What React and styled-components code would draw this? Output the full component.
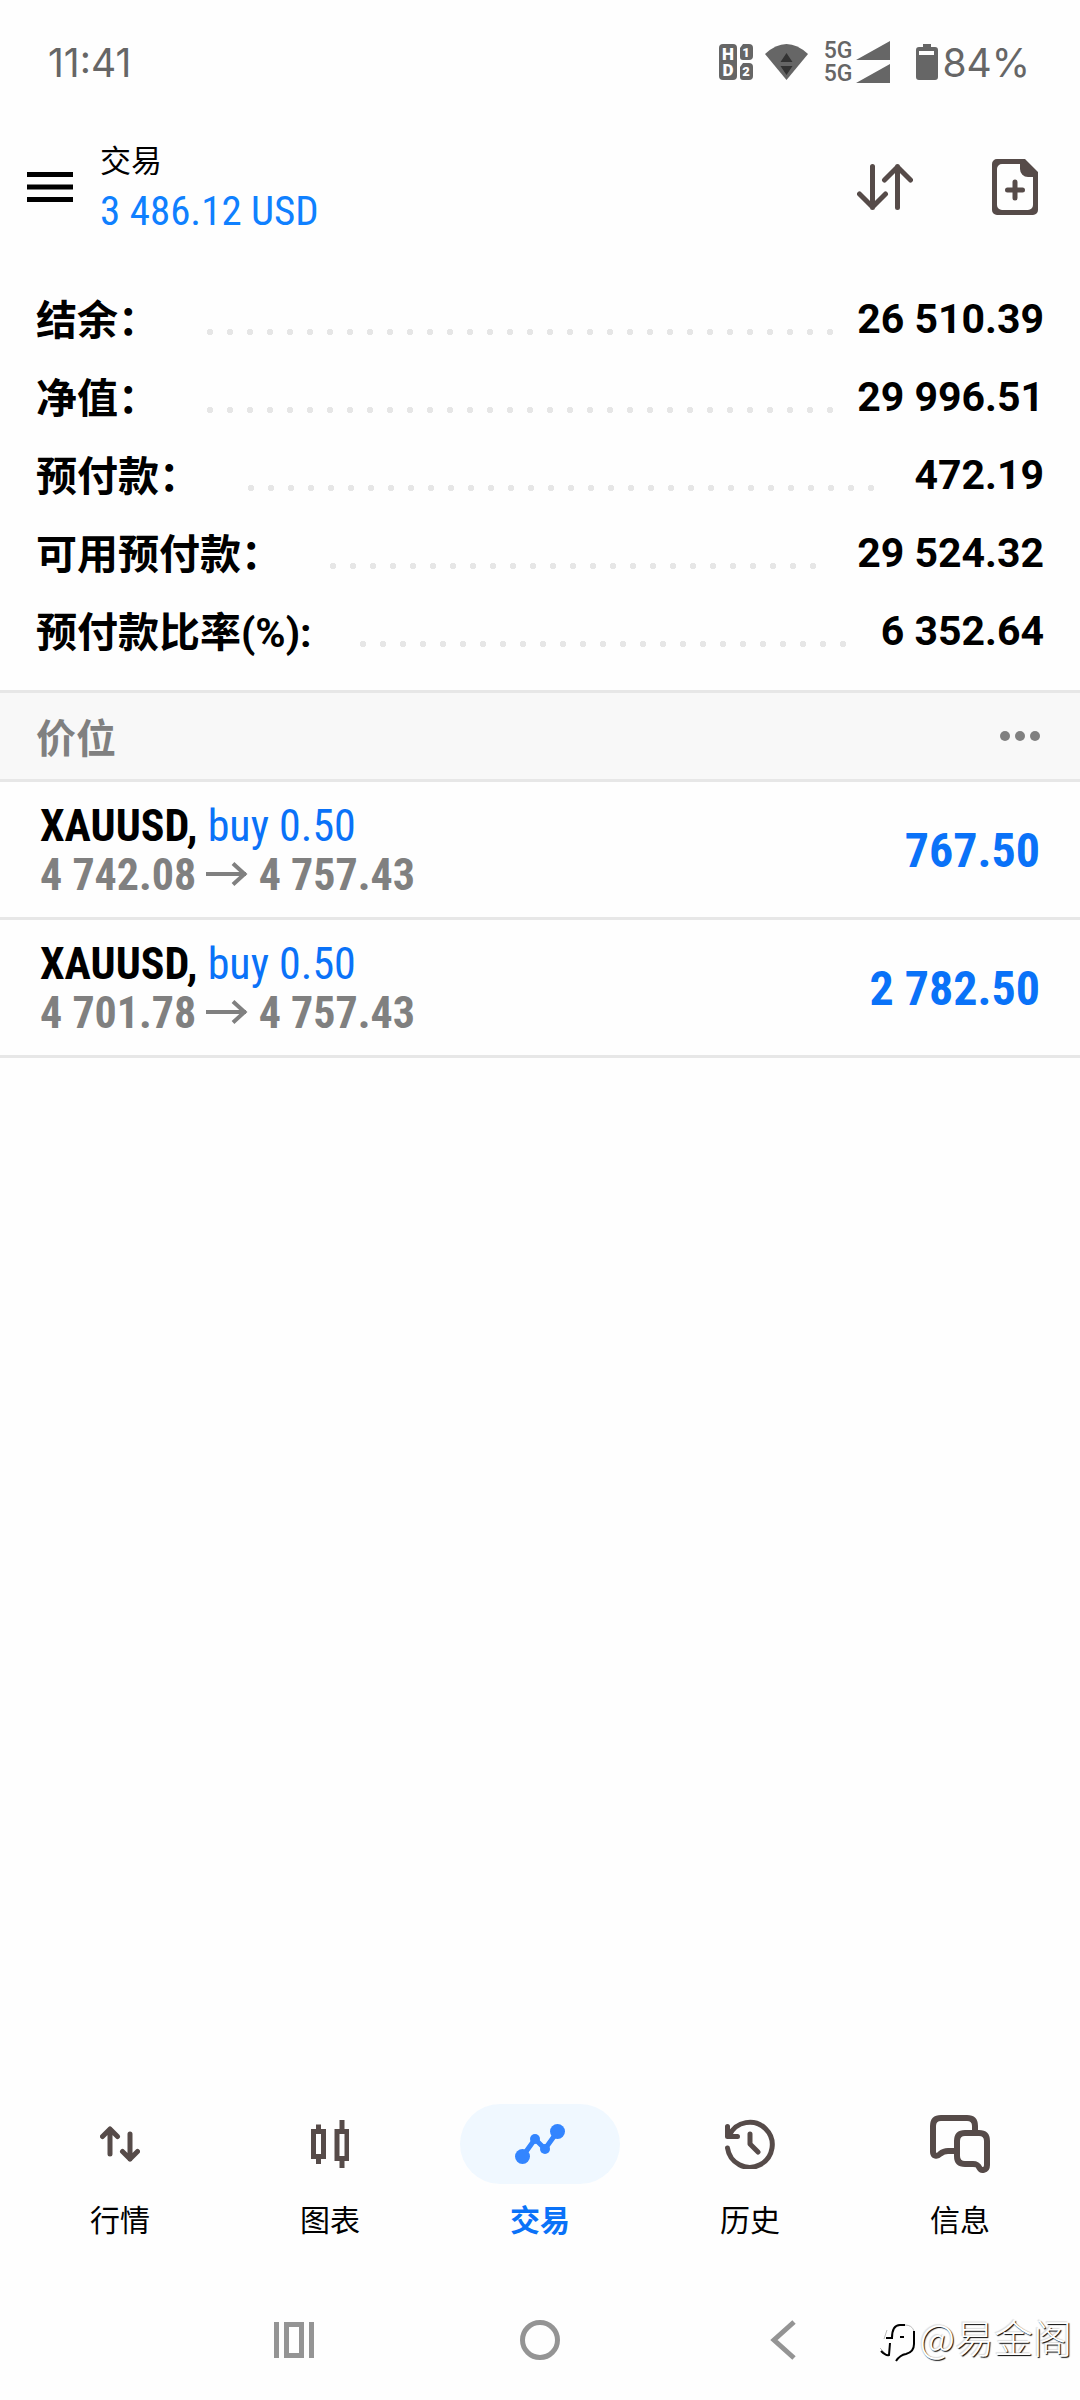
import React, { useState } from 'react';
import styled, { createGlobalStyle } from 'styled-components';

const condensed = `'Roboto Condensed', 'Liberation Sans Narrow', Roboto, 'Noto Sans CJK SC', sans-serif`;

const summary = [
    { label: '结余：', value: '26 510.39' },
    { label: '净值：', value: '29 996.51' },
    { label: '预付款：', value: '472.19' },
    { label: '可用预付款：', value: '29 524.32' },
    { label: '预付款比率(%):', value: '6 352.64' },
];

const positions = [
    { id: 1, symbol: 'XAUUSD', side: 'buy 0.50', open: '4 742.08', current: '4 757.43', profit: '767.50' },
    { id: 2, symbol: 'XAUUSD', side: 'buy 0.50', open: '4 701.78', current: '4 757.43', profit: '2 782.50' },
];

const HdIcon = () => (
    <svg width="34" height="36" viewBox="0 0 34 36" fill="#666">
        <rect x="0" y="0" width="18" height="36" rx="4" />
        <path d="M24 0h6a4 4 0 0 1 4 4v8a4 4 0 0 1-4 4h-6a3 3 0 0 1-3-3V4z" />
        <path d="M24 19h6a4 4 0 0 1 4 4v9a4 4 0 0 1-4 4h-6a3 3 0 0 1-3-3V23z" />
        <g fill="#fff" fontFamily="Roboto, sans-serif" fontWeight="900" textAnchor="middle">
            <text x="9" y="16" fontSize="17">H</text>
            <text x="9" y="32" fontSize="17">D</text>
            <text x="27" y="13" fontSize="13">1</text>
            <text x="27" y="32" fontSize="13">2</text>
        </g>
    </svg>
);

const WifiIcon = () => (
    <svg width="43" height="36" viewBox="0 0 43 36">
        <path d="M0 10Q21.5-10 43 10L21.5 36z" fill="#666" />
        <path d="M21.5 9l6 9h-12zM15.5 22h12l-6 9z" fill="#333" />
    </svg>
);

const SignalIcon = () => (
    <svg width="34" height="42" viewBox="0 0 34 42" fill="#666">
        <path d="M34 0v19H0zM34 23v19H0z" />
    </svg>
);

const BatteryIcon = () => (
    <svg width="22" height="36" viewBox="0 0 22 36">
        <path d="M7 0h8v3h4a3 3 0 0 1 3 3v27a3 3 0 0 1-3 3H3a3 3 0 0 1-3-3V6a3 3 0 0 1 3-3h4z" fill="#666" />
        <path d="M3 7h15v4H3z" fill="#fff" />
    </svg>
);

const MenuIcon = () => (
    <svg width="46" height="30" viewBox="0 0 46 30">
        <path d="M0 0h46v5H0zM0 12.5h46v5H0zM0 25h46v5H0z" />
    </svg>
);

const SortIcon = () => (
    <svg width="56" height="46" viewBox="0 0 56 46" fill="none" stroke="#564b49" strokeWidth="5" strokeLinecap="round" strokeLinejoin="round">
        <path d="M15.5 2.5v41M2.5 30l13 13 13-13M40.5 43.5v-41M27.5 16l13-13 13 13" />
    </svg>
);

const NewOrderIcon = () => (
    <svg width="46" height="56" viewBox="0 0 46 56">
        <path fill="#564b49" fillRule="evenodd" d="M5 0h28l13 13v38a5 5 0 0 1-5 5H5a5 5 0 0 1-5-5V5a5 5 0 0 1 5-5zM10 5a5 5 0 0 0-5 5v36a5 5 0 0 0 5 5h26a5 5 0 0 0 5-5V18h-5a8 8 0 0 1-8-8V5z" />
        <path d="M23 23v16M15.5 31h15" stroke="#564b49" strokeWidth="5" strokeLinecap="round" />
    </svg>
);

const MoreIcon = () => (
    <svg width="40" height="10" viewBox="0 0 40 10" fill="#808080">
        <circle cx="5" cy="5" r="5" />
        <circle cx="20" cy="5" r="5" />
        <circle cx="35" cy="5" r="5" />
    </svg>
);

const ArrowIcon = () => (
    <svg width="42" height="24" viewBox="0 0 42 24" fill="none" stroke="#808080" strokeWidth="4">
        <path d="M0 12h40M27 1.5L38.5 12L27 22.5" />
    </svg>
);

const QuotesIcon = () => (
    <svg width="40" height="36" viewBox="0 0 40 36" fill="none" stroke="#564b49" strokeWidth="5" strokeLinecap="round" strokeLinejoin="round">
        <path d="M10 28V3M2.5 10.5L10 3l7.5 7.5M30 8v25M22.5 25.5L30 33l7.5-7.5" />
    </svg>
);

const ChartIcon = () => (
    <svg width="38" height="48" viewBox="0 0 38 48" fill="none" stroke="#564b49" strokeWidth="5">
        <path d="M2.5 11.5h10v25h-10zM7.5 4.5v6M7.5 37v7M26 11.5h10v27H26zM31 0v11M31 39v9" />
    </svg>
);

const TradeIcon = () => (
    <svg width="50" height="40" viewBox="0 0 50 40" fill="#3385ff">
        <path d="M7.5 32.5L20 15l10 10L42.5 7.5" fill="none" stroke="#3385ff" strokeWidth="5" />
        <circle cx="7.5" cy="32.5" r="7.5" />
        <circle cx="20" cy="15" r="5" />
        <circle cx="30" cy="25" r="5" />
        <circle cx="42.5" cy="7.5" r="7.5" />
    </svg>
);

const HistoryIcon = () => (
    <svg width="50" height="50" viewBox="0 0 50 50" fill="none" stroke="#564b49" strokeWidth="5" strokeLinecap="round" strokeLinejoin="round">
        <path d="M2.5 29A22.500 22.500 0 1 0 4.500 16M2.500 7.500v10h10M25 15v10l8 8" />
    </svg>
);

const MessagesIcon = () => (
    <svg width="60" height="60" viewBox="0 0 60 60" fill="none" stroke="#564b49" strokeWidth="6">
        <path d="M45 18V12Q45 4 37 4H11Q3 4 3 12V38C3 42 7 43 10 40C13 37.5 14 37 18 37H26" />
        <path d="M35 19H49Q57 19 57 27V51C57 57 51 57 49.5 54C48 51 47 50 43 50H35Q27 50 27 42V27Q27 19 35 19Z" />
    </svg>
);

const RecentsIcon = () => (
    <svg width="40" height="36" viewBox="0 0 40 36" fill="none" stroke="#949494" strokeWidth="5">
        <path d="M2.5 0v36M37.5 0v36M12.5 2.5h15v31h-15z" />
    </svg>
);

const HomeIcon = () => (
    <svg width="40" height="40" viewBox="0 0 40 40" fill="none" stroke="#949494" strokeWidth="5">
        <circle cx="20" cy="20" r="17.5" />
    </svg>
);

const BackIcon = () => (
    <svg width="40" height="40" viewBox="0 0 40 40" fill="none" stroke="#949494" strokeWidth="5">
        <path d="M28 2L8 20l20 18" />
    </svg>
);

const PenIcon = () => (
    <svg width="40" height="40" viewBox="0 0 40 40" fill="none">
        <path d="M3 26l7 7M7 17l3-9M28 3q7 0 9 6" stroke="#bbb" />
        <path d="M4 29q5 5 8 4l1-12M9 16h6q0-13 8-13h5M23 15h4" stroke="#000" strokeWidth="2" />
        <path d="M37 9v13q0 8-8 10-6 1-10 7" stroke="#000" strokeWidth="2" />
    </svg>
);

const tabs = [
    { name: '行情', icon: <QuotesIcon /> },
    { name: '图表', icon: <ChartIcon /> },
    { name: '交易', icon: <TradeIcon /> },
    { name: '历史', icon: <HistoryIcon /> },
    { name: '信息', icon: <MessagesIcon /> },
];

const App = () => {

    const [tab, setTab] = useState('交易');

    return (
        <>
            <GlobalStyle />
            <Page>
                <StatusBar>
                    <span>11:41</span>
                    <StatusIcons>
                        <HdIcon />
                        <WifiIcon />
                        <Network>
                            <p>5G<br />5G</p>
                            <SignalIcon />
                        </Network>
                        <Battery>
                            <BatteryIcon />
                            <span>84%</span>
                        </Battery>
                    </StatusIcons>
                </StatusBar>

                <Header>
                    <IconButton aria-label="菜单"><MenuIcon /></IconButton>
                    <Title>
                        <h1>交易</h1>
                        <p>3 486.12 USD</p>
                    </Title>
                    <Actions>
                        <IconButton aria-label="排序"><SortIcon /></IconButton>
                        <IconButton aria-label="新订单"><NewOrderIcon /></IconButton>
                    </Actions>
                </Header>

                <Main>
                    <Summary>
                        {summary.map(({ label, value }) => (
                            <SummaryRow key={label}>
                                <dt>{label}</dt>
                                <Dots />
                                <dd>{value}</dd>
                            </SummaryRow>
                        ))}
                    </Summary>

                    <SectionHead>
                        <h2>价位</h2>
                        <IconButton aria-label="更多"><MoreIcon /></IconButton>
                    </SectionHead>

                    <ul>
                        {positions.map((item) => (
                            <Position key={item.id}>
                                <div>
                                    <Deal>{item.symbol}, <span>{item.side}</span></Deal>
                                    <Prices>{item.open} <ArrowIcon /> {item.current}</Prices>
                                </div>
                                <Profit>{item.profit}</Profit>
                            </Position>
                        ))}
                    </ul>
                </Main>

                <TabBar>
                    {tabs.map(({ name, icon }) => (
                        <Tab key={name} $active={tab === name} onClick={() => setTab(name)}>
                            <span className='pill'>{icon}</span>
                            {name}
                        </Tab>
                    ))}
                </TabBar>

                <SystemBar>
                    <IconButton aria-label="最近任务"><RecentsIcon /></IconButton>
                    <IconButton aria-label="主屏幕"><HomeIcon /></IconButton>
                    <IconButton aria-label="返回"><BackIcon /></IconButton>
                    <Watermark><PenIcon />@易金阁</Watermark>
                </SystemBar>
            </Page>
        </>
    )
};

const GlobalStyle = createGlobalStyle`
    *{
        box-sizing: border-box;
        margin: 0;
        padding: 0;
    }
    body{
        background-color: #fefefe;
        color: #000;
        font-family: Roboto, 'Noto Sans CJK SC', sans-serif;
    }
    ul{
        list-style: none;
    }
    svg{
        display: block;
        flex-shrink: 0;
    }
`;

const Page = styled.div`
    min-height: 100vh;
    display: flex;
    flex-direction: column;
`;

const StatusBar = styled.div`
    height: 124px;
    padding: 0 50px 0 48px;
    display: flex;
    justify-content: space-between;
    align-items: center;
    font-family: Inter, sans-serif;
    font-size: 39px;
    color: #666;
`;

const StatusIcons = styled.div`
    display: flex;
    align-items: center;
    gap: 12px;
`;

const Network = styled.div`
    display: flex;
    align-items: center;
    gap: 4px;
    margin: 0 14px 0 4px;

    p{
        font-family: Roboto, sans-serif;
        font-size: 23px;
        font-weight: 500;
        line-height: 23px;
    }
`;

const Battery = styled.div`
    display: flex;
    align-items: center;
    gap: 4px;
`;

const IconButton = styled.button`
    display: flex;
    border: none;
    background: none;
    cursor: pointer;
`;

const Header = styled.header`
    height: 126px;
    padding: 0 42px 0 27px;
    display: flex;
    align-items: center;
`;

const Title = styled.div`
    flex: 1;
    margin-left: 27px;

    h1{
        font-family: 'Noto Sans CJK SC', sans-serif;
        font-size: 31px;
        font-weight: 400;
        line-height: 48px;
    }
    p{
        font-family: ${condensed};
        font-size: 41px;
        line-height: 56px;
        color: #0f80ff;
    }
`;

const Actions = styled.div`
    display: flex;
    align-items: center;
    gap: 79px;
`;

const Main = styled.main`
    flex: 1;
`;

const Summary = styled.dl`
    padding: 30px 36px 20px;
`;

const SummaryRow = styled.div`
    height: 78px;
    display: flex;
    align-items: center;
    font-size: 41px;
    font-weight: 700;
    white-space: nowrap;

    dt{
        padding-bottom: 4px;
    }
`;

const Dots = styled.span`
    flex: 1;
    margin: 26px 9px 0 48px;

    /* only whole dots are drawn */
    &::before{
        content: '';
        display: block;
        width: round(down, 100%, 20px);
        height: 6px;
        background: radial-gradient(circle at 3px 3px, #e6e6e6 3px, transparent 3px) 0 0 / 20px 6px;
    }
`;

const SectionHead = styled.div`
    height: 92px;
    padding: 0 40px 0 36px;
    display: flex;
    justify-content: space-between;
    align-items: center;
    background-color: #f8f8f8;
    border-top: 3px solid #e7e7e7;
    border-bottom: 3px solid #e7e7e7;

    h2{
        font-family: 'Noto Sans CJK SC', sans-serif;
        font-size: 40px;
        font-weight: 700;
        color: #808080;
    }
`;

const Position = styled.li`
    height: 138px;
    padding: 2px 40px 0;
    display: flex;
    justify-content: space-between;
    align-items: center;
    border-bottom: 3px solid #e7e7e7;
    font-family: ${condensed};
    font-size: 44px;
    font-weight: 700;
    line-height: 49px;
`;

const Deal = styled.p`
    span{
        font-weight: 400;
        color: #0a72f8;
    }
`;

const Prices = styled.p`
    color: #808080;

    svg{
        display: inline-block;
        vertical-align: 4px;
    }
`;

const Profit = styled.p`
    font-size: 48px;
    color: #0a72f8;
`;

const TabBar = styled.nav`
    padding: 0 15px 40px;
    display: flex;
`;

const Tab = styled.button`
    flex: 1;
    display: flex;
    flex-direction: column;
    align-items: center;
    gap: 12px;
    border: none;
    background: none;
    cursor: pointer;
    font-family: 'Noto Sans CJK SC', sans-serif;
    font-size: 30px;
    font-weight: ${({ $active }) => $active ? 700 : 400};
    line-height: 44px;
    color: ${({ $active }) => $active ? '#0a72f8' : '#000'};

    .pill{
        width: 160px;
        height: 80px;
        display: flex;
        justify-content: center;
        align-items: center;
        border-radius: 40px;
        background-color: ${({ $active }) => $active ? '#f0f8ff' : 'transparent'};
    }
`;

const SystemBar = styled.div`
    position: relative;
    height: 120px;
    padding: 0 274px;
    display: flex;
    justify-content: space-between;
    align-items: center;
`;

const Watermark = styled.p`
    position: absolute;
    right: 8px;
    bottom: 38px;
    display: flex;
    align-items: flex-end;
    gap: 3px;
    font-family: 'Noto Sans CJK SC', sans-serif;
    font-size: 39px;
    font-weight: 300;
    line-height: 52px;
    color: #fff;
    text-shadow: 1px 1px 1px #000, -1px -1px 1px #ddd;
`;

export default App;
